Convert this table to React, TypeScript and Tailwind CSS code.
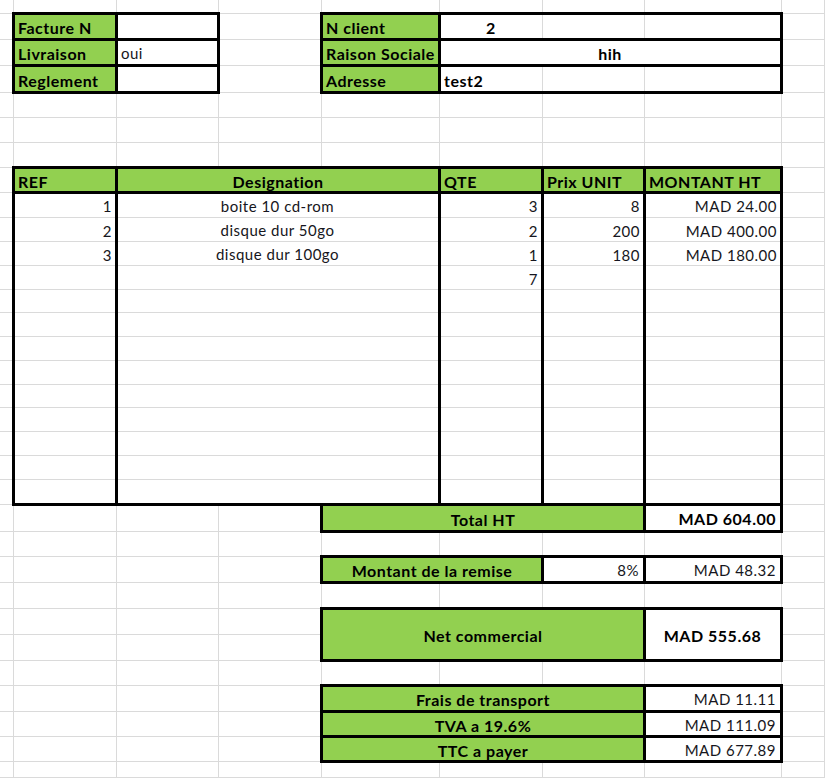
import type { ReactNode } from 'react';

// column widths / row heights of the sheet, shared by gridline layer and content layer
const SHEET =
  'grid grid-cols-[14px_103px_102px_103px_118px_103px_102px_137px_43px] grid-rows-[14px_26px_26px_27px_25px_25px_25px_25px_25px_24px_24px_24px_23px_24px_24px_24px_23px_24px_24px_24px_25px_27px_25px_26px_26px_26px_26px_25px_26px_25px_25px_16px]';

type CellProps = {
  pos: string;
  fill?: 'green' | 'white' | 'none';
  align?: 'left' | 'center' | 'right';
  bold?: boolean;
  children?: ReactNode;
};

function Cell({ pos, fill = 'none', align = 'left', bold, children }: CellProps) {
  const bg =
    fill === 'green'
      ? 'bg-[#92d050]'
      : fill === 'white'
        ? 'bg-white border-r border-b border-[#dadada]'
        : '';
  const justify = align === 'center' ? 'justify-center' : align === 'right' ? 'justify-end' : 'justify-start';
  return (
    <div
      className={`${pos} flex items-center overflow-hidden whitespace-nowrap pl-[4px] pr-[5px] pt-[2px] leading-none tracking-[0.5px] ${justify} ${bg} ${
        bold ? 'text-[16px] font-bold text-black' : 'text-[15px] text-[#161620]'
      }`}
    >
      {children}
    </div>
  );
}

// thick excel border, centred on the gridline
function Box({ pos }: { pos: string }) {
  return <div className={`${pos} -mt-[2px] -ml-[2px] -mr-[1px] -mb-[1px] border-[3px] border-black`} />;
}

const items = [
  { ref: '1', name: 'boite 10 cd-rom', qte: '3', prix: '8', montant: 'MAD 24.00' },
  { ref: '2', name: 'disque dur 50go', qte: '2', prix: '200', montant: 'MAD 400.00' },
  { ref: '3', name: 'disque dur 100go', qte: '1', prix: '180', montant: 'MAD 180.00' },
];

const bodyRows = [
  'row-start-9',
  'row-start-10',
  'row-start-11',
  'row-start-12',
  'row-start-13',
  'row-start-14',
  'row-start-15',
  'row-start-16',
  'row-start-17',
  'row-start-18',
  'row-start-19',
  'row-start-20',
  'row-start-21',
];

export default function App() {
  return (
    <div className="grid h-[778px] w-[825px] overflow-hidden bg-white font-['Lato','Liberation_Sans',sans-serif]">
      {/* sheet gridlines */}
      <div className={`${SHEET} col-start-1 row-start-1`}>
        {Array.from({ length: 32 * 9 }, (_, i) => (
          <div key={i} className="border-r border-b border-[#dadada]" />
        ))}
      </div>

      <div className={`${SHEET} col-start-1 row-start-1`}>
        {/* facture */}
        <Cell pos="col-start-2 row-start-2" fill="green" bold>Facture N</Cell>
        <Cell pos="col-start-2 row-start-3" fill="green" bold>Livraison</Cell>
        <Cell pos="col-start-2 row-start-4" fill="green" bold>Reglement</Cell>
        <Cell pos="col-start-3 row-start-2" fill="white" />
        <Cell pos="col-start-3 row-start-3" fill="white">oui</Cell>
        <Cell pos="col-start-3 row-start-4" fill="white" />

        {/* client */}
        <Cell pos="col-start-5 row-start-2" fill="green" bold>N client</Cell>
        <Cell pos="col-start-5 row-start-3" fill="green" bold>Raison Sociale</Cell>
        <Cell pos="col-start-5 row-start-4" fill="green" bold>Adresse</Cell>
        <Cell pos="col-start-6 row-start-2" align="center" bold>2</Cell>
        <Cell pos="col-start-6 col-span-3 row-start-3" fill="white" align="center" bold>hih</Cell>
        <Cell pos="col-start-6 row-start-4" bold>test2</Cell>

        {/* table header */}
        <Cell pos="col-start-2 row-start-8" fill="green" bold>REF</Cell>
        <Cell pos="col-start-3 col-span-3 row-start-8" fill="green" align="center" bold>Designation</Cell>
        <Cell pos="col-start-6 row-start-8" fill="green" bold>QTE</Cell>
        <Cell pos="col-start-7 row-start-8" fill="green" bold>Prix UNIT</Cell>
        <Cell pos="col-start-8 row-start-8" fill="green" bold>MONTANT HT</Cell>

        {/* table body */}
        {bodyRows.map((row, i) => {
          const it = items[i];
          return (
            <div key={row} className="contents">
              <Cell pos={`col-start-3 col-span-3 ${row}`} fill="white" align="center">{it?.name}</Cell>
              {it && (
                <>
                  <Cell pos={`col-start-2 ${row}`} align="right">{it.ref}</Cell>
                  <Cell pos={`col-start-6 ${row}`} align="right">{it.qte}</Cell>
                  <Cell pos={`col-start-7 ${row}`} align="right">{it.prix}</Cell>
                  <Cell pos={`col-start-8 ${row}`} align="right">{it.montant}</Cell>
                </>
              )}
            </div>
          );
        })}
        <Cell pos="col-start-6 row-start-12" align="right">7</Cell>

        {/* totals */}
        <Cell pos="col-start-5 col-span-3 row-start-22" fill="green" align="center" bold>Total HT</Cell>
        <Cell pos="col-start-8 row-start-22" fill="white" align="right" bold>MAD 604.00</Cell>

        <Cell pos="col-start-5 col-span-2 row-start-24" fill="green" align="center" bold>Montant de la remise</Cell>
        <Cell pos="col-start-7 row-start-24" fill="white" align="right">8%</Cell>
        <Cell pos="col-start-8 row-start-24" fill="white" align="right">MAD 48.32</Cell>

        <Cell pos="col-start-5 col-span-3 row-start-26 row-span-2" fill="green" align="center" bold>Net commercial</Cell>
        <Cell pos="col-start-8 row-start-26 row-span-2" fill="white" align="center" bold>MAD 555.68</Cell>

        <Cell pos="col-start-5 col-span-3 row-start-29" fill="green" align="center" bold>Frais de transport</Cell>
        <Cell pos="col-start-8 row-start-29" fill="white" align="right">MAD 11.11</Cell>
        <Cell pos="col-start-5 col-span-3 row-start-30" fill="green" align="center" bold>TVA a 19.6%</Cell>
        <Cell pos="col-start-8 row-start-30" fill="white" align="right">MAD 111.09</Cell>
        <Cell pos="col-start-5 col-span-3 row-start-31" fill="green" align="center" bold>TTC a payer</Cell>
        <Cell pos="col-start-8 row-start-31" fill="white" align="right">MAD 677.89</Cell>

        {/* thick borders */}
        <Box pos="col-start-2 row-start-2" />
        <Box pos="col-start-2 row-start-3" />
        <Box pos="col-start-2 row-start-4" />
        <Box pos="col-start-3 row-start-2" />
        <Box pos="col-start-3 row-start-3" />
        <Box pos="col-start-3 row-start-4" />

        <Box pos="col-start-5 row-start-2" />
        <Box pos="col-start-5 row-start-3" />
        <Box pos="col-start-5 row-start-4" />
        <Box pos="col-start-6 col-span-3 row-start-2" />
        <Box pos="col-start-6 col-span-3 row-start-3" />
        <Box pos="col-start-6 col-span-3 row-start-4" />

        <Box pos="col-start-2 row-start-8" />
        <Box pos="col-start-3 col-span-3 row-start-8" />
        <Box pos="col-start-6 row-start-8" />
        <Box pos="col-start-7 row-start-8" />
        <Box pos="col-start-8 row-start-8" />
        <Box pos="col-start-2 row-start-9 row-span-13" />
        <Box pos="col-start-3 col-span-3 row-start-9 row-span-13" />
        <Box pos="col-start-6 row-start-9 row-span-13" />
        <Box pos="col-start-7 row-start-9 row-span-13" />
        <Box pos="col-start-8 row-start-9 row-span-13" />

        <Box pos="col-start-5 col-span-3 row-start-22" />
        <Box pos="col-start-8 row-start-22" />
        <Box pos="col-start-5 col-span-2 row-start-24" />
        <Box pos="col-start-7 row-start-24" />
        <Box pos="col-start-8 row-start-24" />
        <Box pos="col-start-5 col-span-3 row-start-26 row-span-2" />
        <Box pos="col-start-8 row-start-26 row-span-2" />
        <Box pos="col-start-5 col-span-3 row-start-29" />
        <Box pos="col-start-8 row-start-29" />
        <Box pos="col-start-5 col-span-3 row-start-30" />
        <Box pos="col-start-8 row-start-30" />
        <Box pos="col-start-5 col-span-3 row-start-31" />
        <Box pos="col-start-8 row-start-31" />
      </div>
    </div>
  );
}
